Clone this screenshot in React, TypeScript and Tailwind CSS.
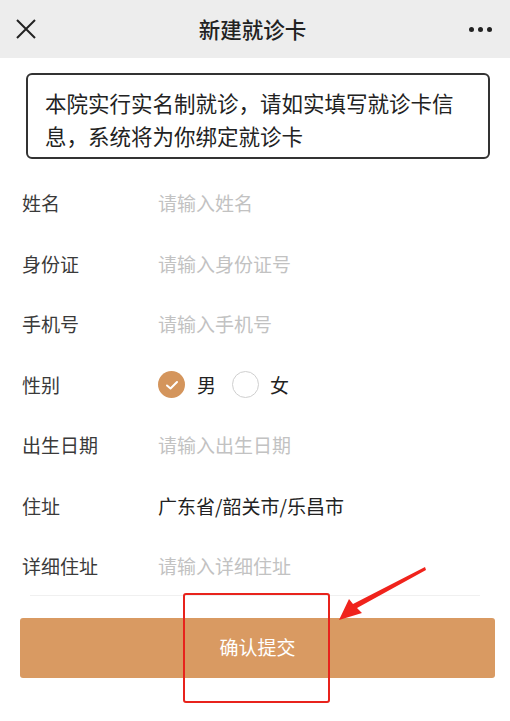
import React from "react";

const rows: { label: string; placeholder?: string; value?: string; gender?: boolean }[] = [
  { label: "姓名", placeholder: "请输入姓名" },
  { label: "身份证", placeholder: "请输入身份证号" },
  { label: "手机号", placeholder: "请输入手机号" },
  { label: "性别", gender: true },
  { label: "出生日期", placeholder: "请输入出生日期" },
  { label: "住址", value: "广东省/韶关市/乐昌市" },
  { label: "详细住址", placeholder: "请输入详细住址" },
];

const App: React.FC = () => {
  return (
    <div
      className="relative w-[510px] h-[721px] bg-white overflow-hidden"
      style={{ fontFamily: '"Noto Sans CJK SC", "Noto Sans", sans-serif' }}
    >
      {/* Header */}
      <div className="h-[58px] bg-[#ededed] flex items-center justify-between pl-[16px] pr-[18px]">
        <svg width="20" height="20" viewBox="0 0 20 20" className="text-[#222]">
          <path d="M1 1 L19 19 M19 1 L1 19" stroke="currentColor" strokeWidth="2" />
        </svg>
        <div className="text-[21.5px] text-[#222] font-medium">新建就诊卡</div>
        <div className="flex gap-[4px] items-center">
          <span className="w-[5px] h-[5px] rounded-full bg-[#222]" />
          <span className="w-[5px] h-[5px] rounded-full bg-[#222]" />
          <span className="w-[5px] h-[5px] rounded-full bg-[#222]" />
        </div>
      </div>

      {/* Notice */}
      <div className="mx-[26px] w-[464px] mt-[15px] border-2 border-[#333] rounded-[6px] pl-[17px] pr-[8px] pt-[11px] pb-[5px] text-[21.5px] leading-[33px] text-[#222]">
        本院实行实名制就诊，请如实填写就诊卡信息，系统将为你绑定就诊卡
      </div>

      {/* Form */}
      <div className="mt-[14px]">
        {rows.map((r) => (
          <div key={r.label} className="h-[60.5px] flex items-center text-[19px]">
            <div className="w-[158px] pl-[22px] text-[#3a3a3a]">{r.label}</div>
            {r.gender ? (
              <div className="flex items-center">
                <span className="w-[27px] h-[27px] rounded-full bg-[#d4955c] flex items-center justify-center">
                  <svg width="16" height="16" viewBox="0 0 16 16">
                    <path d="M3 8.5 L6.5 11.5 L13 5" stroke="white" strokeWidth="2" fill="none" strokeLinecap="round" strokeLinejoin="round" />
                  </svg>
                </span>
                <span className="ml-[12px] text-[#222]">男</span>
                <span className="ml-[16px] w-[27px] h-[27px] rounded-full border border-[#cfcfcf]" />
                <span className="ml-[11px] text-[#222]">女</span>
              </div>
            ) : r.value ? (
              <div className="text-[#222]">{r.value}</div>
            ) : (
              <div className="text-[#c2c2c2]">{r.placeholder}</div>
            )}
          </div>
        ))}
        <div className="mx-[30px] h-px bg-[#f0f0f0] -mt-[2px]" />
      </div>

      {/* Submit */}
      <button className="mt-[22px] ml-[20px] w-[475px] h-[60px] rounded-[3px] bg-[#d99a62] text-white text-[19px] flex items-center justify-center">
        确认提交
      </button>

      {/* Annotation overlay */}
      <div className="absolute left-[183px] top-[593px] w-[147px] h-[110px] border-2 border-[#e8231c] rounded-[3px]" />
      <svg className="absolute left-0 top-0" width="510" height="721" viewBox="0 0 510 721">
        <polygon points="425,567 426,570 357,608 362,613 339,620 349,599 353,604" fill="#f0231c" />
      </svg>
    </div>
  );
};

export default App;
